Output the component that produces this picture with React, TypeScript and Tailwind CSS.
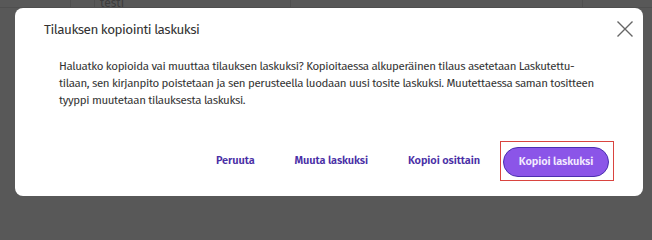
const actions = ['Peruuta', 'Muuta laskuksi', 'Kopioi osittain'];

export default function App() {
  return (
    <div className="relative h-[204px] min-h-screen w-[652px] overflow-hidden bg-[#585858] font-['Fira_Sans','Roboto',sans-serif]">
      {/* Table behind the overlay */}
      <div className="absolute inset-x-0 top-0 flex h-[8px] border-b border-[#4f4f4f]">
        <div className="w-[71px] border-r border-[#4f4f4f]" />
        <div className="w-[24px] border-r border-[#4f4f4f]" />
        <div className="w-[195px] pl-[5px] text-[12px] leading-[6px] text-[#3c3c3c]">testi</div>
        <div className="w-[292px] border-l border-[#4f4f4f]" />
        <div className="w-[35px] border-l border-[#4f4f4f]" />
      </div>

      <div className="relative ml-[15px] mt-[8px] flex h-[188px] w-[628px] flex-col rounded-lg bg-white">
        <div className="flex items-start justify-between pl-[29px] pr-[10px] pt-[12px]">
          <h2 className="text-[13.5px] leading-[19px] tracking-[-0.5px] text-[#333]">Tilauksen kopiointi laskuksi</h2>
          <button className="mt-[1px] p-0 text-[#666]">
            <svg width="16" height="16" viewBox="0 0 16 16" fill="none" stroke="currentColor" strokeWidth="1.4">
              <path d="M0.5 0.5 15.5 15.5M15.5 0.5 0.5 15.5" />
            </svg>
          </button>
        </div>

        <p className="ml-[44px] mt-[19px] w-[545px] text-[11.5px] leading-[17px] tracking-[-0.35px] text-[#333]">
          Haluatko kopioida vai muuttaa tilauksen laskuksi? Kopioitaessa alkuperäinen tilaus asetetaan Laskutettu-tilaan,
          sen kirjanpito poistetaan ja sen perusteella luodaan uusi tosite laskuksi. Muutettaessa saman tositteen tyyppi
          muutetaan tilauksesta laskuksi.
        </p>

        <div className="mt-auto mb-[15px] mr-[29px] flex items-center justify-end">
          {actions.map((label) => (
            <button key={label} className="px-5 py-2 text-[11px] font-semibold tracking-[-0.1px] text-[#4a2fa6]">
              {label}
            </button>
          ))}
          <span className="flex border border-[#d9443f] pb-[3px] pl-[2px] pr-[4px] pt-[5px]">
            <button className="h-[30px] w-[106px] rounded-full border border-[#4b30b0] bg-[#8b55e8] text-[11px] font-semibold tracking-[-0.1px] text-[#f3ecff]">
              Kopioi laskuksi
            </button>
          </span>
        </div>
      </div>
    </div>
  );
}
